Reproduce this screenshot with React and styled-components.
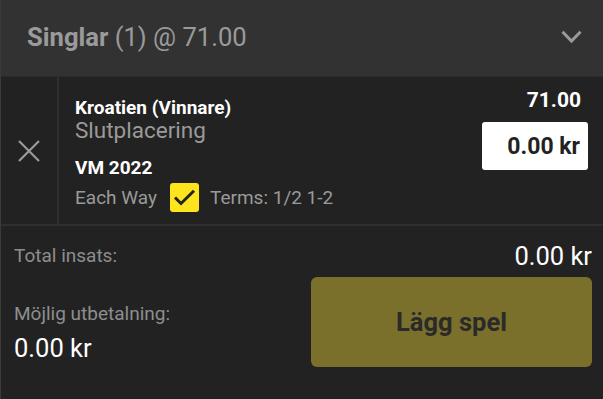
import React from "react";
import styled, { createGlobalStyle } from "styled-components";

const GlobalStyle = createGlobalStyle`
  html, body {
    margin: 0;
    padding: 0;
    background: #222222;
    font-family: Roboto, "Liberation Sans", sans-serif;
  }
`;

const Slip = styled.div`
  width: 603px;
  height: 399px;
  background: #222222;
  border-left: 1px solid #3a3a3a;
  box-sizing: border-box;
  overflow: hidden;
`;

const Header = styled.div`
  height: 77px;
  background: #323232;
  display: flex;
  align-items: center;
  justify-content: space-between;
  padding: 0 21px 2px 26px;
  box-sizing: border-box;
  color: #9a9a9a;
  font-size: 25.6px;
  line-height: 30px;
  border-bottom: 1px solid #2a2a2a;
`;

const Title = styled.div`
  b {
    font-weight: 700;
  }
`;

const BetRow = styled.div`
  display: flex;
  height: 147px;
  border-bottom: 2px solid #2f2f2f;
`;

const RemoveCol = styled.div`
  width: 56px;
  flex-shrink: 0;
  display: flex;
  align-items: center;
  justify-content: center;
  border-right: 2px solid #2f2f2f;
`;

const BetBody = styled.div`
  flex: 1;
  display: flex;
  justify-content: space-between;
  padding: 0 15px 0 16px;
`;

const Info = styled.div`
  display: flex;
  flex-direction: column;
  padding-top: 20px;
`;

const Strong = styled.div`
  color: #ffffff;
  font-weight: 700;
  font-size: 19px;
  line-height: 21px;
  margin-top: ${(p) => p.mt || 0}px;
`;

const Muted = styled.div`
  color: #9a9a9a;
  font-size: 22.5px;
  line-height: 24px;
`;

const EachWay = styled.div`
  display: flex;
  align-items: center;
  margin-top: 5px;
  color: #9a9a9a;
  font-size: 19px;
  line-height: 22px;
`;

const Check = styled.div`
  width: 29px;
  height: 29px;
  margin: 0 11px 0 13px;
  border-radius: 3px;
  background: #fde41c;
  display: flex;
  align-items: center;
  justify-content: center;
`;

const OddsCol = styled.div`
  display: flex;
  flex-direction: column;
  align-items: flex-end;
  padding-top: 11px;
`;

const Odds = styled.div`
  color: #ffffff;
  font-weight: 700;
  font-size: 21px;
  line-height: 24px;
  margin-right: 7px;
`;

const Stake = styled.div`
  margin-top: 10px;
  width: 106px;
  height: 48px;
  background: #ffffff;
  border-radius: 3px;
  box-sizing: border-box;
  display: flex;
  align-items: center;
  justify-content: flex-end;
  padding-right: 8px;
  color: #222222;
  font-weight: 700;
  font-size: 23px;
`;

const Footer = styled.div`
  padding: 15px 11px 0 13px;
`;

const TotalRow = styled.div`
  display: flex;
  justify-content: space-between;
  align-items: center;
  height: 30px;
`;

const Label = styled.div`
  color: #8e8e8e;
  font-size: 19px;
  line-height: 22px;
`;

const Amount = styled.div`
  color: #ffffff;
  font-size: 25.5px;
  line-height: 30px;
  margin-top: ${(p) => p.mt || 0}px;
`;

const PayRow = styled.div`
  display: flex;
  justify-content: space-between;
  align-items: flex-start;
  margin-top: 6px;
`;

const Payout = styled.div`
  display: flex;
  flex-direction: column;
  padding-top: 26px;
`;

const PlaceButton = styled.button`
  width: 281px;
  height: 90px;
  border: none;
  border-radius: 6px;
  background: #7a702b;
  color: #2a2a2a;
  font-family: inherit;
  font-weight: 700;
  font-size: 25.5px;
  padding: 0;
`;

export default function App() {
  return (
    <>
      <GlobalStyle />
      <Slip>
        <Header>
          <Title>
            <b>Singlar</b> (1) @ 71.00
          </Title>
          <svg width="21" height="14" viewBox="0 0 21 14">
            <path d="M1.5 1.8 L10.5 11 L19.5 1.8" fill="none" stroke="#9a9a9a" strokeWidth="3" />
          </svg>
        </Header>
        <BetRow>
          <RemoveCol>
            <svg width="22" height="22" viewBox="0 0 22 22">
              <path d="M1 1 L21 21 M21 1 L1 21" stroke="#9a9a9a" strokeWidth="2.2" />
            </svg>
          </RemoveCol>
          <BetBody>
            <Info>
              <Strong>Kroatien (Vinnare)</Strong>
              <Muted>Slutplacering</Muted>
              <Strong mt={15}>VM 2022</Strong>
              <EachWay>
                <span>Each Way</span>
                <Check>
                  <svg width="23" height="17" viewBox="0 0 23 17">
                    <path d="M2 8.5 L8 14.5 L21 1.8" fill="none" stroke="#222" strokeWidth="3" />
                  </svg>
                </Check>
                <span>Terms: 1/2 1-2</span>
              </EachWay>
            </Info>
            <OddsCol>
              <Odds>71.00</Odds>
              <Stake>0.00 kr</Stake>
            </OddsCol>
          </BetBody>
        </BetRow>
        <Footer>
          <TotalRow>
            <Label>Total insats:</Label>
            <Amount>0.00 kr</Amount>
          </TotalRow>
          <PayRow>
            <Payout>
              <Label>Möjlig utbetalning:</Label>
              <Amount mt={8}>0.00 kr</Amount>
            </Payout>
            <PlaceButton>Lägg spel</PlaceButton>
          </PayRow>
        </Footer>
      </Slip>
    </>
  );
}
